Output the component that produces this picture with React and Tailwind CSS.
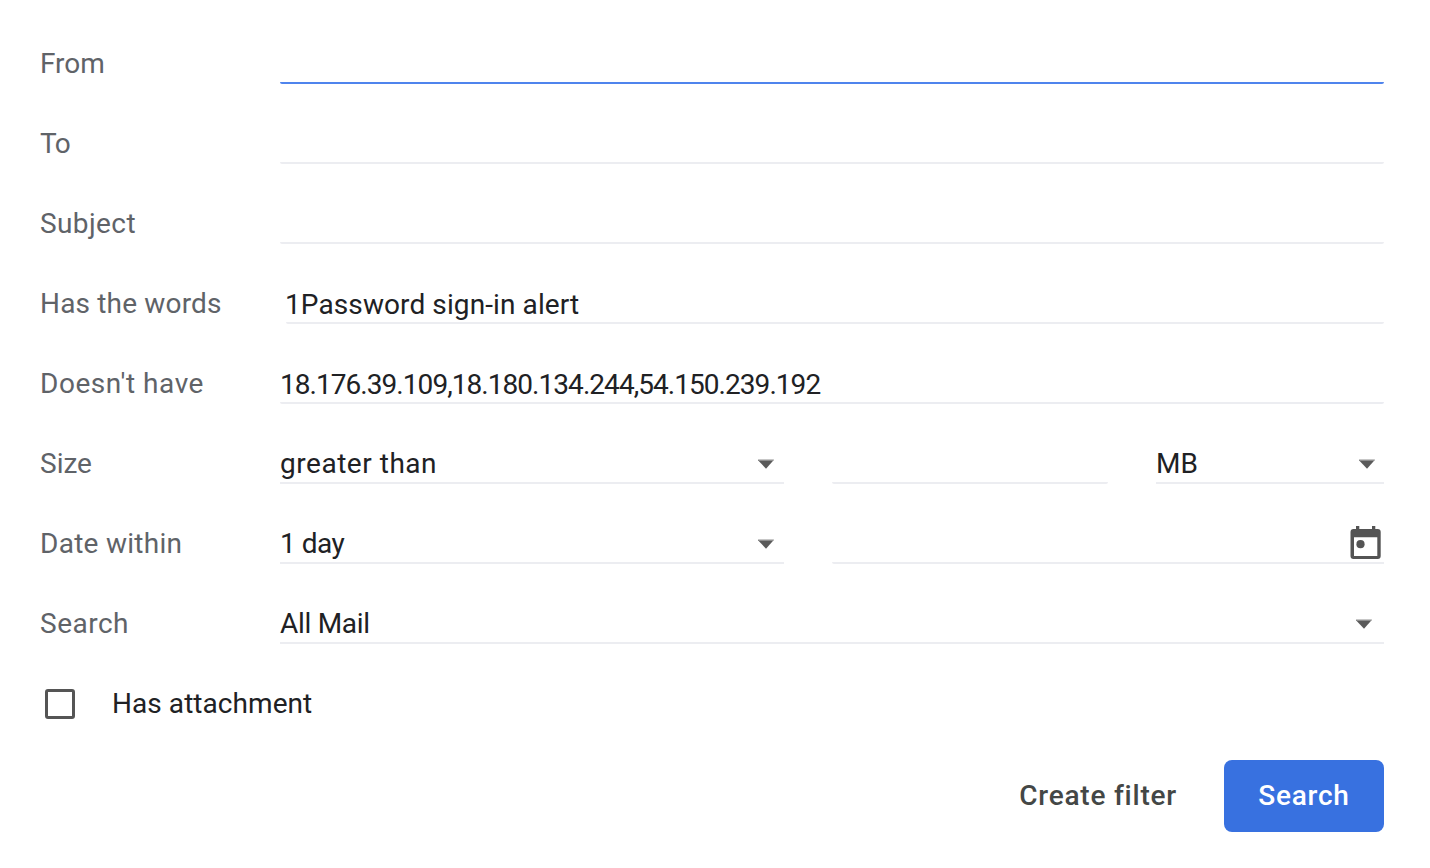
import React, { useState } from 'react';

function Row({ label, labelClass = '', children }) {
  return (
    <div className="flex h-20 items-end">
      <label className={`w-60 shrink-0 h-10 leading-10 text-[#5f6368] ${labelClass}`}>{label}</label>
      {children}
    </div>
  );
}

function TextField({ className = 'flex-1', active = false, textClass = '', children }) {
  return (
    <div className={`h-10 border-b-2 rounded-bl-[2px] rounded-br-[2px] ${active ? 'border-[#4f84ed]' : 'border-[#ecedf1]'} ${className}`}>
      <span className={`block h-10 leading-[42px] whitespace-nowrap ${textClass}`}>{children}</span>
    </div>
  );
}

function SelectField({ className = 'flex-1', textClass = '', arrowClass = 'mr-2.5', children }) {
  return (
    <div className={`flex h-10 justify-between border-b-2 border-[#ecedf1] ${className}`}>
      <span className={`h-10 leading-10 whitespace-nowrap ${textClass}`}>{children}</span>
      <svg className={`mt-[15px] w-4 h-[10px] shrink-0 ${arrowClass}`} viewBox="0 0 16 10">
        <path d="M-0.500 0.700h16.500L8 9.700z" fill="#5a5a5a" />
        <path d="M-0.500 0.700h16.500l-0.900 1H0.400z" fill="#a0a0a0" />
      </svg>
    </div>
  );
}

function CalendarIcon() {
  return (
    <svg className="w-[31px] h-[34px] mr-[3px] mt-[2px] shrink-0" viewBox="0 0 31 34" fill="#545454">
      <path fillRule="evenodd" d="M6 0h3.300v3h12.700V0h3.300v3h2.400a3 3 0 0 1 3 3v24a3 3 0 0 1-3 3H3.500a3 3 0 0 1-3-3V6a3 3 0 0 1 3-3H6zM4 11.200V30h23.300V11.200z" />
      <circle cx="10.500" cy="18.200" r="4.100" />
    </svg>
  );
}

export default function App() {
  const [checked, setChecked] = useState(false);

  return (
    <div className="w-[1430px] h-[868px] bg-white pt-1 pl-10 pr-[46px] font-['Roboto',sans-serif] text-[28px] text-[#202124] overflow-hidden">
      <Row label="From"><TextField active /></Row>
      <Row label="To" labelClass="tracking-[-0.5px]"><TextField /></Row>
      <Row label="Subject" labelClass="tracking-[0.4px]"><TextField /></Row>
      <Row label="Has the words" labelClass="tracking-[0.17px]">
        <TextField className="flex-1 ml-1.5" textClass="-ml-px tracking-[0.1px]">1Password sign-in alert</TextField>
      </Row>
      <Row label="Doesn't have" labelClass="tracking-[0.55px]">
        <TextField textClass="tracking-[-0.95px]">18.176.39.109,18.180.134.244,54.150.239.192</TextField>
      </Row>
      <Row label="Size">
        <SelectField className="w-[504px]" textClass="tracking-[0.53px]">greater than</SelectField>
        <TextField className="w-[276px] ml-12" />
        <SelectField className="flex-1 ml-12" arrowClass="mr-[9px]">MB</SelectField>
      </Row>
      <Row label="Date within" labelClass="tracking-[0.27px]">
        <SelectField className="w-[504px]" textClass="tracking-[-0.5px]">1 day</SelectField>
        <div className="flex flex-1 ml-12 h-10 justify-end border-b-2 border-[#ecedf1] rounded-bl-[2px]">
          <CalendarIcon />
        </div>
      </Row>
      <Row label="Search" labelClass="tracking-[0.5px]">
        <SelectField textClass="tracking-[-0.3px]" arrowClass="mr-[12px]">All Mail</SelectField>
      </Row>

      <div className="flex items-center h-10 mt-10">
        <button
          type="button"
          role="checkbox"
          aria-checked={checked}
          aria-label="Has attachment"
          onClick={() => setChecked(!checked)}
          className="w-[30px] h-[30px] ml-[5px] border-[3px] border-[#555] rounded-[3px]"
        />
        <span className="ml-[37px] leading-10 tracking-[0.06px]">Has attachment</span>
      </div>

      <div className="flex justify-end items-center mt-9 font-medium">
        <button type="button" className="mr-[47px] leading-[72px] tracking-[0.78px] text-[#444746]">Create filter</button>
        <button type="button" className="w-40 h-[72px] rounded-lg bg-[#3871e0] text-white tracking-[0.75px]">Search</button>
      </div>
    </div>
  );
}
